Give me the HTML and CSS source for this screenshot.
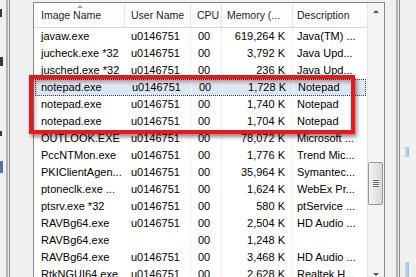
FILE: index.html
```html
<!DOCTYPE html>
<html lang="en">
<head>
    <meta charset="UTF-8">
    <title>Processes</title>
    <link rel="stylesheet" href="styles.css">
</head>
<body>

<div class="screen">
    <div class="side-left">
        <div class="edge">
            <span class="frag f1"></span>
            <span class="frag f2"></span>
            <span class="frag f3"></span>
            <span class="frag f4"></span>
        </div>
        <div class="frame-line"></div>
    </div>

    <div class="procs">
        <div class="list">
            <div class="head">
                <div class="hcell">Image Name<span class="sort-arrow"></span></div>
                <div class="hcell">User Name</div>
                <div class="hcell">CPU</div>
                <div class="hcell">Memory (...</div>
                <div class="hcell">Description</div>
            </div>
            <div class="rows">
                <div class="row"><span>javaw.exe</span><span>u0146751</span><span>00</span><span class="mem">619,264 K</span><span>Java(TM) ...</span></div>
                <div class="row"><span>jucheck.exe *32</span><span>u0146751</span><span>00</span><span class="mem">3,792 K</span><span>Java Upd...</span></div>
                <div class="row"><span>jusched.exe *32</span><span>u0146751</span><span>00</span><span class="mem">236 K</span><span>Java Upd...</span></div>
                <div class="row selected"><span>notepad.exe</span><span>u0146751</span><span>00</span><span class="mem">1,728 K</span><span>Notepad</span></div>
                <div class="row"><span>notepad.exe</span><span>u0146751</span><span>00</span><span class="mem">1,740 K</span><span>Notepad</span></div>
                <div class="row"><span>notepad.exe</span><span>u0146751</span><span>00</span><span class="mem">1,704 K</span><span>Notepad</span></div>
                <div class="row"><span>OUTLOOK.EXE</span><span>u0146751</span><span>00</span><span class="mem">78,072 K</span><span>Microsoft ...</span></div>
                <div class="row"><span>PccNTMon.exe</span><span>u0146751</span><span>00</span><span class="mem">1,776 K</span><span>Trend Mic...</span></div>
                <div class="row"><span>PKIClientAgen...</span><span>u0146751</span><span>00</span><span class="mem">35,964 K</span><span>Symantec...</span></div>
                <div class="row"><span>ptoneclk.exe ...</span><span>u0146751</span><span>00</span><span class="mem">1,624 K</span><span>WebEx Pr...</span></div>
                <div class="row"><span>ptsrv.exe *32</span><span>u0146751</span><span>00</span><span class="mem">580 K</span><span>ptService ...</span></div>
                <div class="row"><span>RAVBg64.exe</span><span>u0146751</span><span>00</span><span class="mem">2,504 K</span><span>HD Audio ...</span></div>
                <div class="row"><span>RAVBg64.exe</span><span></span><span>00</span><span class="mem">1,248 K</span><span></span></div>
                <div class="row"><span>RAVBg64.exe</span><span>u0146751</span><span>00</span><span class="mem">3,468 K</span><span>HD Audio ...</span></div>
                <div class="row"><span>RtkNGUI64.exe</span><span>u0146751</span><span>00</span><span class="mem">2,628 K</span><span>Realtek H...</span></div>
            </div>
            <div class="mark"></div>
        </div>

        <div class="scrollbar">
            <div class="sb-btn"><span class="arrow-up"></span></div>
            <div class="sb-track">
                <div class="thumb">
                    <div class="grip"></div>
                </div>
            </div>
            <div class="sb-btn"><span class="arrow-down"></span></div>
        </div>
    </div>

    <div class="side-right">
        <div class="gap"></div>
        <div class="frame-line"></div>
        <div class="far">
            <span class="blob b1"></span>
            <span class="blob b2"></span>
        </div>
    </div>
</div>

</body>
</html>
```

FILE: styles.css
```css
:root {
    --win-bg: #f0f0f0;
    --border: #828790;
    --text: #000000;
    --head-text: #1e1e1e;
    --divider: #e2e4e8;
    --body-divider: #eef2f8;
    --select: #dde7f4;
    --mark: #f0141b;
}
body {
    margin: 0;
    padding: 0;
    width: 416px;
    height: 277px;
    overflow: hidden;
    background: var(--win-bg);
    font-family: 'Liberation Sans', Arial, sans-serif;
    font-size: 11px;
    color: var(--text);
}
.screen {
    display: flex;
    height: 277px;
    overflow: hidden;
}

/* window behind, left side */
.side-left {
    width: 33px;
    display: flex;
    flex-shrink: 0;
}
.edge {
    width: 6px;
    position: relative;
}
.frag {
    position: absolute;
    left: 0;
    width: 2px;
    background: #3a3a3a;
}
.f1 { top: 9px; height: 8px; }
.f2 { top: 57px; height: 9px; width: 3px; }
.f3 { top: 131px; height: 5px; }
.f4 { top: 161px; height: 12px; width: 3px; background: #5a7391; }
.frame-line {
    width: 2px;
    border-left: 2px solid #b4b4b4;
    border-right: 1px solid #8e8e8e;
    background: #e8e8e8;
    width: 1px;
}

/* process list */
.procs {
    display: flex;
    margin-top: 2px;
    border-top: 1px solid var(--border);
    border-left: 1px solid var(--border);
    border-right: 1px solid var(--border);
    background: #ffffff;
    align-self: flex-start;
}
.list {
    width: 333px;
    position: relative;
}
.head, .row {
    display: grid;
    grid-template-columns: 91px 66px 31px 71px 74px;
}
.head {
    height: 24px;
    border-bottom: 1px solid #d5d5d5;
    background: linear-gradient(#ffffff, #fbfbfb);
    color: var(--head-text);
    font-size: 10.5px;
}
.hcell {
    padding-left: 7px;
    line-height: 24px;
    border-right: 1px solid var(--divider);
    white-space: nowrap;
    overflow: hidden;
    position: relative;
}
.hcell:nth-child(2) { padding-left: 6px; }
.hcell:nth-child(3) { padding-left: 6px; }
.hcell:nth-child(4) { padding-left: 5px; }
.hcell:nth-child(5) { padding-left: 4px; border-right: none; }
.sort-arrow {
    position: absolute;
    left: 43px;
    top: 2px;
    width: 0;
    height: 0;
    border-left: 3px solid transparent;
    border-right: 3px solid transparent;
    border-bottom: 3px solid #97a5b8;
}
.row {
    height: 17px;
    line-height: 17px;
}
.row span {
    padding-left: 7px;
    white-space: nowrap;
    overflow: hidden;
    border-right: 1px solid var(--body-divider);
}
.row span:nth-child(1) { border-right-color: transparent; }
.row span:nth-child(2) { padding-left: 6px; }
.row span:nth-child(3) { padding-left: 7px; }
.row span:nth-child(5) { padding-left: 4px; border-right: none; }
.row .mem {
    text-align: right;
    padding-left: 0;
    padding-right: 7px;
}
.row.selected {
    background: linear-gradient(#e4eaf2, #d8e5f5);
    outline: 1px dotted #444;
    outline-offset: -1px;
    margin: 0 1px;
}
.row.selected span:nth-child(1) { padding-left: 6px; }

/* red annotation box */
.mark {
    position: absolute;
    left: -5px;
    top: 72px;
    width: 318px;
    height: 51px;
    border: 4px solid var(--mark);
    box-shadow: 2px 3px 4px rgba(0, 0, 0, 0.45), inset 2px 3px 4px rgba(0, 0, 0, 0.35);
    pointer-events: none;
}

/* scrollbar */
.scrollbar {
    width: 17px;
    display: flex;
    flex-direction: column;
    background: #f4f4f4;
    border-left: 1px solid #e6e6e6;
    box-sizing: border-box;
}
.sb-btn {
    height: 17px;
    display: flex;
    justify-content: center;
    align-items: center;
}
.arrow-up, .arrow-down {
    width: 0;
    height: 0;
    border-left: 3px solid transparent;
    border-right: 3px solid transparent;
}
.arrow-up { border-bottom: 3px solid #555; }
.arrow-down { border-top: 3px solid #555; }
.sb-track {
    flex: 1;
    padding-top: 142px;
}
.thumb {
    height: 41px;
    margin: 0 1px 0 0;
    border: 1px solid #979797;
    border-radius: 2px;
    background: linear-gradient(to right, #f4f4f4, #e6e6e6 50%, #d8d8d8);
    display: flex;
    justify-content: center;
    align-items: center;
}
.grip {
    width: 6px;
    height: 7px;
    background: repeating-linear-gradient(#6f6f6f 0 1px, transparent 1px 2px);
}

/* window behind, right side */
.side-right {
    flex: 1;
    display: flex;
}
.side-right .gap {
    width: 11px;
}
.far {
    flex: 1;
    position: relative;
}
.blob {
    position: absolute;
    left: 5px;
    width: 4px;
    background: linear-gradient(to right, #c9dcef, #9fbcd9);
}
.b1 { top: 147px; height: 10px; }
.b2 { top: 262px; height: 15px; }
```
